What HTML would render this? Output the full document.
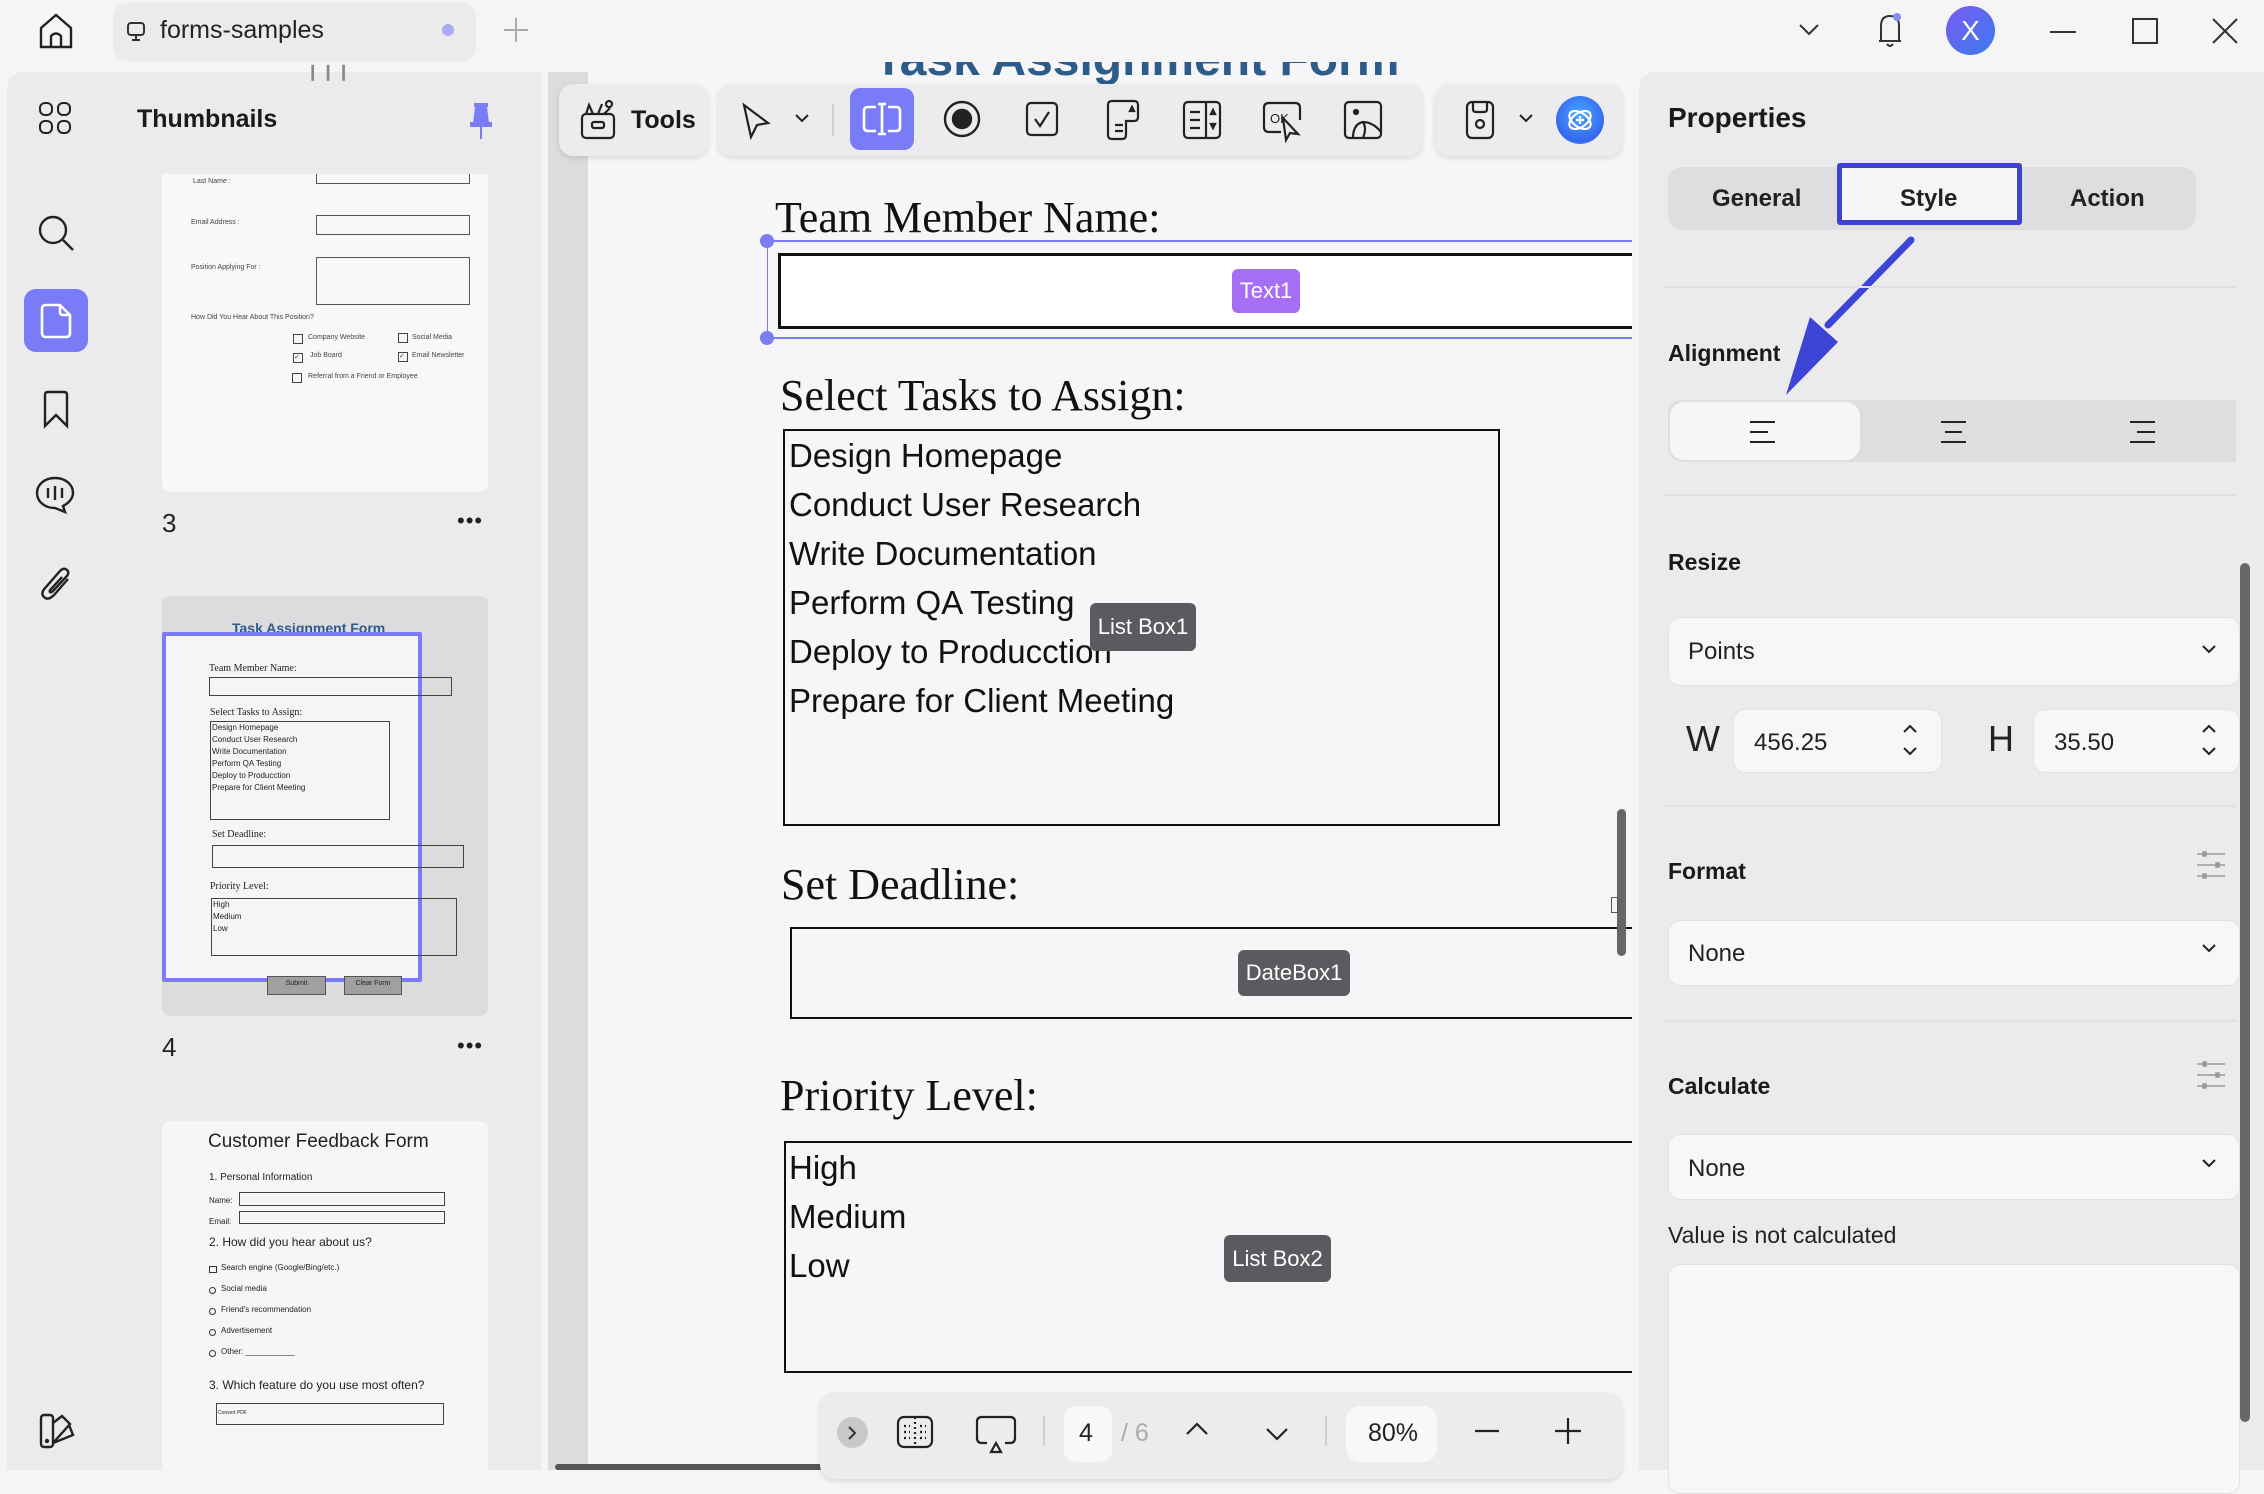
<!DOCTYPE html>
<html><head><meta charset="utf-8"><style>
*{margin:0;padding:0;box-sizing:border-box}
body{width:2264px;height:1470px;overflow:hidden;background:#f5f5f6;font-family:"Liberation Sans",sans-serif;position:relative;color:#1a1a1a}
.a{position:absolute}
.serif{font-family:"Liberation Serif",serif}
.badge{position:absolute;color:#fff;font-size:22px;display:flex;align-items:center;justify-content:center;border-radius:6px}
.sep{position:absolute;height:2px;background:#e1e1e3}
.h{position:absolute;font-weight:bold;font-size:23px}
.dd{position:absolute;background:#f7f7f8;border:1px solid #e2e2e4;border-radius:12px}
.tb{position:absolute;background:#ececee;border-radius:14px;box-shadow:0 2px 6px rgba(0,0,0,.12)}
svg{position:absolute;overflow:visible}
.t{position:absolute;white-space:nowrap}
</style></head><body>

<!-- top bar -->
<svg style="left:38px;top:12px" width="36" height="38" viewBox="0 0 36 38" fill="none" stroke="#222" stroke-width="2.4"><path d="M3 16 L18 3 L33 16 V35 H3 Z"/><path d="M13 35 V24 Q18 19 23 24 V35"/></svg>
<div class="a" style="left:113px;top:3px;width:363px;height:58px;background:#ebebec;border-radius:14px"></div>
<svg style="left:126px;top:21px" width="20" height="22" viewBox="0 0 20 22" fill="none" stroke="#333" stroke-width="2"><rect x="2" y="2" width="16" height="12" rx="3"/><path d="M10 14v5M6 19h8"/></svg>
<div class="t" style="left:160px;top:16px;font-size:25px;color:#222">forms-samples</div>
<div class="a" style="left:442px;top:24px;width:12px;height:12px;border-radius:50%;background:#a9abf5"></div>
<svg style="left:504px;top:18px" width="24" height="24" stroke="#aaa" stroke-width="2"><path d="M12 0v24M0 12h24"/></svg>
<svg style="left:1799px;top:24px" width="20" height="12" fill="none" stroke="#333" stroke-width="2"><path d="M1 1l9 9 9-9"/></svg>
<svg style="left:1876px;top:10px" width="28" height="40" fill="none" stroke="#333" stroke-width="2"><path d="M5 31V16Q5 6 14 6Q23 6 23 16V31H3h22M11 34q3 4 6 0"/><circle cx="21" cy="7" r="4" fill="#8a8cf5" stroke="none"/></svg>
<div class="a" style="left:1946px;top:6px;width:49px;height:49px;border-radius:50%;background:linear-gradient(135deg,#7a5cf0,#3b7af0);color:#fff;font-size:28px;display:flex;align-items:center;justify-content:center">X</div>
<svg style="left:2050px;top:30px" width="26" height="4"><path d="M0 2h26" stroke="#333" stroke-width="2"/></svg>
<svg style="left:2132px;top:18px" width="26" height="26" fill="none" stroke="#333" stroke-width="2"><rect x="1" y="1" width="24" height="24"/></svg>
<svg style="left:2212px;top:18px" width="26" height="26" stroke="#333" stroke-width="2"><path d="M1 1l24 24M25 1L1 25"/></svg>

<!-- left rail -->
<div class="a" style="left:7px;top:72px;width:98px;height:1398px;background:#ebebed;border-top-left-radius:16px"></div>
<svg style="left:39px;top:102px" width="32" height="32" fill="none" stroke="#222" stroke-width="2"><rect x="1" y="1" width="12" height="12" rx="5"/><rect x="19" y="1" width="12" height="12" rx="5"/><rect x="1" y="19" width="12" height="12" rx="5"/><rect x="19" y="19" width="12" height="12" rx="5"/></svg>
<svg style="left:37px;top:214px" width="38" height="38" fill="none" stroke="#222" stroke-width="2.4"><circle cx="16" cy="16" r="13"/><path d="M26 26l10 10"/></svg>
<div class="a" style="left:24px;top:289px;width:64px;height:63px;border-radius:12px;background:#7a7cf7"></div>
<svg style="left:40px;top:303px" width="32" height="36" fill="none" stroke="#fff" stroke-width="2.6"><path d="M6 2h14l10 10v18q0 4-4 4H6q-4 0-4-4V6q0-4 4-4z"/><path d="M20 2v7q0 3 3 3h7"/></svg>
<svg style="left:42px;top:390px" width="28" height="38" fill="none" stroke="#222" stroke-width="2.4"><path d="M3 5q0-3 3-3h16q3 0 3 3v31l-11-11-11 11z"/></svg>
<svg style="left:35px;top:476px" width="40" height="38" fill="none" stroke="#222" stroke-width="2.4"><path d="M20 2C9 2 2 9 2 17s7 15 18 15l10 4-2-6c6-3 10-8 10-13C38 9 31 2 20 2z"/><path d="M13 12v10M20 10v14M27 12v10"/></svg>
<svg style="left:40px;top:565px" width="34" height="38" fill="none" stroke="#222" stroke-width="2.4"><path d="M28 14L14 30q-6 6-10 2t2-10L20 6q4-4 7-1t-1 7L13 26q-2 2-3 1t1-3l11-12"/></svg>
<svg style="left:39px;top:1413px" width="36" height="36" fill="none" stroke="#222" stroke-width="2.4"><rect x="2" y="2" width="12" height="32" rx="3"/><path d="M14 10l9-7 8 8-17 19M14 30l20-8-4-10"/><circle cx="8" cy="28" r="1" fill="#222"/></svg>

<!-- thumbnails panel -->
<div class="a" style="left:105px;top:72px;width:436px;height:1398px;background:#ebebed"></div>
<div class="t" style="left:306px;top:62px;font-size:16px;color:#888;letter-spacing:2px">❙❙❙</div>
<div class="t" style="left:137px;top:105px;font-size:25px;font-weight:bold">Thumbnails</div>
<svg style="left:468px;top:103px" width="26" height="36" fill="#7a7cf7"><rect x="6" y="0" width="14" height="4"/><path d="M7 4h12l2 16H5z"/><rect x="2" y="19" width="22" height="5"/><rect x="12" y="24" width="2" height="12"/></svg>

<!-- thumb 1 -->
<div class="a" style="left:162px;top:174px;width:326px;height:318px;background:#f8f8f9;border-radius:0 0 8px 8px;overflow:hidden;font-size:7px;color:#444">
  <div class="t" style="left:31px;top:4px">Last Name :</div>
  <div class="a" style="left:154px;top:-10px;width:154px;height:20px;border:1.5px solid #555"></div>
  <div class="t" style="left:29px;top:45px">Email Address :</div>
  <div class="a" style="left:154px;top:41px;width:154px;height:20px;border:1.5px solid #555"></div>
  <div class="t" style="left:29px;top:90px">Position Applying For :</div>
  <div class="a" style="left:154px;top:83px;width:154px;height:48px;border:1.5px solid #555"></div>
  <div class="t" style="left:29px;top:140px">How Did You Hear About This Position?</div>
  <div class="a" style="left:131px;top:160px;width:10px;height:10px;border:1px solid #444"></div><div class="t" style="left:146px;top:160px">Company Website</div>
  <div class="a" style="left:236px;top:159px;width:10px;height:10px;border:1px solid #444"></div><div class="t" style="left:250px;top:160px">Social Media</div>
  <div class="a" style="left:131px;top:179px;width:10px;height:10px;border:1px solid #444;font-size:7px;line-height:8px">✓</div><div class="t" style="left:148px;top:178px">Job Board</div>
  <div class="a" style="left:236px;top:178px;width:10px;height:10px;border:1px solid #444;font-size:7px;line-height:8px">✓</div><div class="t" style="left:250px;top:178px">Email Newsletter</div>
  <div class="a" style="left:130px;top:199px;width:10px;height:10px;border:1px solid #444"></div><div class="t" style="left:146px;top:199px">Referral from a Friend or Employee</div>
</div>
<div class="t" style="left:162px;top:508px;font-size:26px;color:#222">3</div>
<div class="t" style="left:457px;top:508px;font-size:22px;color:#222;letter-spacing:1px">•••</div>

<!-- thumb 2 -->
<div class="a" style="left:162px;top:596px;width:326px;height:420px;background:#dcdcde;border-radius:8px"></div>
<div class="t" style="left:232px;top:620px;font-size:14px;font-weight:bold;color:#2d5b8a">Task Assignment Form</div>
<div class="a" style="left:162px;top:632px;width:260px;height:350px;background:#f5f5f7;border:4px solid #7a7cf7;border-radius:2px"></div>
<div class="a serif" style="left:162px;top:596px;width:326px;height:420px;font-size:10px;color:#222">
  <div class="t" style="left:47px;top:67px">Team Member Name:</div>
  <div class="a" style="left:47px;top:81px;width:243px;height:19px;border:1.5px solid #444"></div>
  <div class="t" style="left:48px;top:111px">Select Tasks to Assign:</div>
  <div class="a" style="left:48px;top:125px;width:180px;height:99px;border:1.5px solid #444;font-family:'Liberation Sans',sans-serif;font-size:8px;line-height:12px;padding-left:1px">Design Homepage<br>Conduct User Research<br>Write Documentation<br>Perform QA Testing<br>Deploy to Producction<br>Prepare for Client Meeting</div>
  <div class="t" style="left:50px;top:233px">Set Deadline:</div>
  <div class="a" style="left:50px;top:249px;width:252px;height:23px;border:1.5px solid #444"></div>
  <div class="t" style="left:48px;top:285px">Priority Level:</div>
  <div class="a" style="left:49px;top:302px;width:246px;height:58px;border:1.5px solid #444;font-family:'Liberation Sans',sans-serif;font-size:8px;line-height:12px;padding-left:1px">High<br>Medium<br>Low</div>
  <div class="a" style="left:105px;top:380px;width:59px;height:19px;background:#a0a0a2;border:1.5px solid #555;font-family:'Liberation Sans',sans-serif;font-size:7px;text-align:center;line-height:14px">Submit</div>
  <div class="a" style="left:182px;top:380px;width:58px;height:19px;background:#a0a0a2;border:1.5px solid #555;font-family:'Liberation Sans',sans-serif;font-size:7px;text-align:center;line-height:14px">Clear Form</div>
</div>
<div class="t" style="left:162px;top:1032px;font-size:26px;color:#222">4</div>
<div class="t" style="left:457px;top:1033px;font-size:22px;color:#222;letter-spacing:1px">•••</div>

<!-- thumb 3 -->
<div class="a" style="left:162px;top:1121px;width:326px;height:360px;background:#f6f6f7;border-radius:8px;color:#222;font-size:8px">
  <div class="t" style="left:46px;top:10px;font-size:19px">Customer Feedback Form</div>
  <div class="t" style="left:47px;top:51px;font-size:10px">1. Personal Information</div>
  <div class="t" style="left:47px;top:75px">Name:</div><div class="a" style="left:77px;top:71px;width:206px;height:14px;border:1.5px solid #444"></div>
  <div class="t" style="left:47px;top:96px">Email:</div><div class="a" style="left:77px;top:90px;width:206px;height:13px;border:1.5px solid #444"></div>
  <div class="t" style="left:47px;top:114px;font-size:12px">2. How did you hear about us?</div>
  <div class="a" style="left:47px;top:145px;width:8px;height:7px;border:1px solid #333"></div><div class="t" style="left:59px;top:142px">Search engine (Google/Bing/etc.)</div>
  <div class="a" style="left:47px;top:166px;width:7px;height:7px;border:1px solid #333;border-radius:50%"></div><div class="t" style="left:59px;top:163px">Social media</div>
  <div class="a" style="left:47px;top:187px;width:7px;height:7px;border:1px solid #333;border-radius:50%"></div><div class="t" style="left:59px;top:184px">Friend's recommendation</div>
  <div class="a" style="left:47px;top:208px;width:7px;height:7px;border:1px solid #333;border-radius:50%"></div><div class="t" style="left:59px;top:205px">Advertisement</div>
  <div class="a" style="left:47px;top:229px;width:7px;height:7px;border:1px solid #333;border-radius:50%"></div><div class="t" style="left:59px;top:226px">Other: ___________</div>
  <div class="t" style="left:47px;top:257px;font-size:12px">3. Which feature do you use most often?</div>
  <div class="a" style="left:54px;top:282px;width:228px;height:22px;border:1.5px solid #444;font-size:5px;line-height:18px;padding-left:1px">Convert PDF</div>
</div>

<!-- document area -->
<div class="a" style="left:548px;top:72px;width:40px;height:1398px;background:#dcdcde"></div>
<div class="a" style="left:588px;top:62px;width:1044px;height:1408px;background:#f6f6f8;overflow:hidden">
  <div class="t" style="left:286px;top:-30px;font-size:48px;font-weight:bold;color:#2d5b8a">Task Assignment Form</div>
</div>
<div class="a" style="left:555px;top:1464px;width:268px;height:6px;background:#555;border-radius:3px"></div>

<div class="t serif" style="left:775px;top:192px;font-size:44px;color:#111">Team Member Name:</div>
<div class="a" style="left:767px;top:240px;width:865px;height:2px;background:#7a7cf0"></div>
<div class="a" style="left:767px;top:337px;width:865px;height:2px;background:#7a7cf0"></div>
<div class="a" style="left:767px;top:241px;width:1px;height:97px;background:#7a7cf0"></div>
<div class="a" style="left:760px;top:234px;width:14px;height:14px;border-radius:50%;background:#7a7cf0"></div>
<div class="a" style="left:760px;top:331px;width:14px;height:14px;border-radius:50%;background:#7a7cf0"></div>
<div class="a" style="left:778px;top:253px;width:854px;height:76px;background:#fff;border:3px solid #111;border-right:none"></div>
<div class="badge" style="left:1232px;top:269px;width:68px;height:44px;background:#a66ef5">Text1</div>

<div class="t serif" style="left:780px;top:370px;font-size:44px;color:#111">Select Tasks to Assign:</div>
<div class="a" style="left:783px;top:429px;width:717px;height:397px;border:2.5px solid #111;font-size:33px;line-height:49px;padding-left:4px;color:#111">Design Homepage<br>Conduct User Research<br>Write Documentation<br>Perform QA Testing<br>Deploy to Producction<br>Prepare for Client Meeting</div>
<div class="badge" style="left:1090px;top:603px;width:106px;height:48px;background:#5b5a5f">List Box1</div>

<div class="t serif" style="left:781px;top:859px;font-size:44px;color:#111">Set Deadline:</div>
<div class="a" style="left:790px;top:927px;width:842px;height:92px;border:2.5px solid #111;border-right:none"></div>
<div class="badge" style="left:1238px;top:950px;width:112px;height:46px;background:#5b5a5f">DateBox1</div>
<div class="a" style="left:1617px;top:809px;width:9px;height:147px;background:#666;border-radius:5px"></div>
<div class="a" style="left:1611px;top:897px;width:7px;height:16px;border:1.5px solid #555;background:#f6f6f8"></div>

<div class="t serif" style="left:780px;top:1070px;font-size:44px;color:#111">Priority Level:</div>
<div class="a" style="left:784px;top:1141px;width:848px;height:232px;border:2.5px solid #111;border-right:none;font-size:33px;line-height:49px;padding-left:3px;color:#111">High<br>Medium<br>Low</div>
<div class="badge" style="left:1224px;top:1235px;width:107px;height:47px;background:#5b5a5f">List Box2</div>

<!-- top toolbar -->
<div class="tb" style="left:559px;top:84px;width:149px;height:72px"></div>
<svg style="left:580px;top:100px" width="36" height="40" fill="none" stroke="#222" stroke-width="2.2"><rect x="2" y="14" width="32" height="24" rx="4"/><rect x="12" y="22" width="12" height="6" rx="2"/><path d="M6 14l3-9 4 9M18 14l4-10M26 4a3 3 0 1 1 0 .1M24 14l6-6"/></svg>
<div class="t" style="left:631px;top:106px;font-size:25px;font-weight:bold">Tools</div>

<div class="tb" style="left:718px;top:84px;width:704px;height:72px"></div>
<svg style="left:741px;top:103px" width="30" height="36" fill="none" stroke="#222" stroke-width="2.2"><path d="M3 2l24 18-11 2-6 12z"/></svg>
<svg style="left:795px;top:114px" width="14" height="9" fill="none" stroke="#222" stroke-width="2"><path d="M1 1l6 6 6-6"/></svg>
<div class="a" style="left:832px;top:104px;width:2px;height:32px;background:#d0d0d2"></div>
<div class="a" style="left:850px;top:88px;width:64px;height:62px;border-radius:10px;background:#7a7cf7"></div>
<svg style="left:862px;top:101px" width="40" height="36" fill="none" stroke="#fff" stroke-width="2.6"><path d="M14 6H6q-4 0-4 4v16q0 4 4 4h8M26 6h8q4 0 4 4v16q0 4-4 4h-8M20 3v30M16 3h8M16 33h8"/></svg>
<svg style="left:943px;top:100px" width="38" height="38" fill="none" stroke="#222" stroke-width="2.4"><circle cx="19" cy="19" r="17"/><circle cx="19" cy="19" r="9" fill="#222"/></svg>
<svg style="left:1025px;top:101px" width="34" height="36" fill="none" stroke="#222" stroke-width="2.2"><rect x="2" y="2" width="30" height="32" rx="4"/><path d="M10 18l5 7 9-14"/></svg>
<svg style="left:1104px;top:99px" width="40" height="42" fill="none" stroke="#222" stroke-width="2.2"><path d="M4 6q0-4 4-4h22q4 0 4 4v12q0 4-4 4h-8v14q0 4-4 4H8q-4 0-4-4z"/><path d="M11 26h8M11 32h8M28 8l-2 4h4z" /></svg>
<svg style="left:1182px;top:100px" width="40" height="40" fill="none" stroke="#222" stroke-width="2.2"><rect x="2" y="2" width="36" height="36" rx="4"/><path d="M24 2v36M8 12h10M8 20h10M8 28h10M29 14l2-4 2 4zM29 24l2 4 2-4z"/></svg>
<svg style="left:1261px;top:100px" width="44" height="46" fill="none" stroke="#222" stroke-width="2.2"><path d="M20 32H8q-5 0-5-5V8q0-5 5-5h26q5 0 5 5v12"/><path d="M22 18l3 22 4-7 8 1z"/><text x="9" y="23" font-size="13" font-family="Liberation Sans" fill="#222" stroke="none">OK</text></svg>
<svg style="left:1343px;top:100px" width="40" height="40" fill="none" stroke="#222" stroke-width="2.2"><rect x="2" y="2" width="36" height="36" rx="4"/><circle cx="13" cy="12" r="2" fill="#222"/><path d="M10 38q0-14 10-16 10 0 18 10M20 22q4 6 0 16"/></svg>

<div class="tb" style="left:1435px;top:84px;width:187px;height:72px"></div>
<svg style="left:1465px;top:100px" width="30" height="40" fill="none" stroke="#222" stroke-width="2.2"><rect x="2" y="2" width="26" height="36" rx="5"/><path d="M8 2v7q0 3 3 3h8q3 0 3-3V2"/><circle cx="15" cy="24" r="4"/></svg>
<svg style="left:1519px;top:114px" width="14" height="9" fill="none" stroke="#222" stroke-width="2"><path d="M1 1l6 6 6-6"/></svg>
<div class="a" style="left:1556px;top:96px;width:48px;height:48px;border-radius:50%;background:radial-gradient(circle at 50% 40%,#4aa8ff,#3566f0 70%,#6ad0ff)"></div>
<svg style="left:1566px;top:106px" width="28" height="28" fill="none" stroke="#fff" stroke-width="2.2"><ellipse cx="14" cy="14" rx="12" ry="7" transform="rotate(-35 14 14)"/><ellipse cx="14" cy="14" rx="12" ry="7" transform="rotate(35 14 14)"/><path d="M14 10v8M10 14h8"/></svg>

<!-- bottom bar -->
<div class="tb" style="left:820px;top:1393px;width:802px;height:86px"></div>
<div class="a" style="left:837px;top:1417px;width:31px;height:31px;border-radius:50%;background:#c8c8ca"></div>
<svg style="left:848px;top:1426px" width="9" height="14" fill="none" stroke="#333" stroke-width="2"><path d="M1 1l6 6-6 6"/></svg>
<svg style="left:896px;top:1415px" width="38" height="34" fill="none" stroke="#222" stroke-width="2.2"><rect x="2" y="2" width="34" height="30" rx="6"/><path d="M19 2v30M8 11h6M8 17h6M8 23h6M24 11h6M24 17h6M24 23h6" stroke-dasharray="2 3"/></svg>
<svg style="left:975px;top:1415px" width="42" height="40" fill="none" stroke="#222" stroke-width="2.2"><path d="M12 28H7q-5 0-5-5V7q0-5 5-5h28q5 0 5 5v16q0 5-5 5h-5"/><path d="M21 28l-5 9h10z"/></svg>
<div class="a" style="left:1043px;top:1416px;width:2px;height:30px;background:#d0d0d2"></div>
<div class="a" style="left:1064px;top:1406px;width:48px;height:56px;border-radius:12px;background:#f8f8f9"></div>
<div class="t" style="left:1079px;top:1419px;font-size:25px;color:#222">4</div>
<div class="t" style="left:1121px;top:1419px;font-size:25px;color:#aaa">/ 6</div>
<svg style="left:1186px;top:1422px" width="22" height="13" fill="none" stroke="#222" stroke-width="2.2"><path d="M1 12l10-10 10 10"/></svg>
<svg style="left:1266px;top:1428px" width="22" height="13" fill="none" stroke="#222" stroke-width="2.2"><path d="M1 1l10 10 10-10"/></svg>
<div class="a" style="left:1325px;top:1416px;width:2px;height:30px;background:#d0d0d2"></div>
<div class="a" style="left:1346px;top:1406px;width:91px;height:56px;border-radius:14px;background:#f8f8f9"></div>
<div class="t" style="left:1368px;top:1419px;font-size:25px;color:#222">80%</div>
<svg style="left:1475px;top:1429px" width="24" height="4"><path d="M0 2h24" stroke="#222" stroke-width="2.2"/></svg>
<svg style="left:1555px;top:1418px" width="26" height="26" stroke="#222" stroke-width="2.2"><path d="M13 0v26M0 13h26"/></svg>

<!-- right panel -->
<div class="a" style="left:1639px;top:72px;width:625px;height:1398px;background:#ebebed;border-top-left-radius:16px"></div>
<div class="t" style="left:1668px;top:102px;font-size:28px;font-weight:bold">Properties</div>
<div class="a" style="left:1668px;top:167px;width:528px;height:63px;background:#dedee0;border-radius:14px"></div>
<div class="t" style="left:1712px;top:185px;font-size:24px;font-weight:bold;color:#222">General</div>
<div class="a" style="left:1837px;top:163px;width:185px;height:62px;background:#f6f6f8;border:5px solid #3d42d2;border-radius:3px"></div>
<div class="t" style="left:1900px;top:185px;font-size:24px;font-weight:bold;color:#222">Style</div>
<div class="t" style="left:2070px;top:185px;font-size:24px;font-weight:bold;color:#222">Action</div>
<svg style="left:1780px;top:235px" width="140" height="170"><path d="M131 5L48 90" stroke="#3d45d6" stroke-width="7" stroke-linecap="round"/><path d="M6 160L30 82 58 107z" fill="#3d45d6"/></svg>
<div class="sep" style="left:1663px;top:286px;width:573px"></div>
<div class="h" style="left:1668px;top:340px">Alignment</div>
<div class="a" style="left:1668px;top:400px;width:568px;height:62px;background:#dedee0;border-radius:14px 0 0 14px"></div>
<div class="a" style="left:1670px;top:402px;width:190px;height:58px;background:#f6f6f8;border-radius:14px"></div>
<svg style="left:1750px;top:420px" width="30" height="26" stroke="#222" stroke-width="2"><path d="M0 2h25M0 12h18M0 22h25"/></svg>
<svg style="left:1941px;top:420px" width="30" height="26" stroke="#222" stroke-width="2"><path d="M0 2h25M4 12h17M0 22h25"/></svg>
<svg style="left:2130px;top:420px" width="30" height="26" stroke="#222" stroke-width="2"><path d="M0 2h25M7 12h18M0 22h25"/></svg>
<div class="sep" style="left:1663px;top:494px;width:573px"></div>
<div class="h" style="left:1668px;top:549px">Resize</div>
<div class="dd" style="left:1668px;top:617px;width:572px;height:69px"></div>
<div class="t" style="left:1688px;top:638px;font-size:24px;color:#222">Points</div>
<svg style="left:2202px;top:645px" width="14" height="9" fill="none" stroke="#222" stroke-width="2"><path d="M1 1l6 6 6-6"/></svg>
<div class="t" style="left:1686px;top:718px;font-size:36px;color:#222;font-weight:300">W</div>
<div class="dd" style="left:1733px;top:709px;width:209px;height:64px"></div>
<div class="t" style="left:1754px;top:729px;font-size:24px;color:#222">456.25</div>
<svg style="left:1903px;top:724px" width="14" height="32" fill="none" stroke="#222" stroke-width="2"><path d="M1 8l6-6 6 6M1 24l6 6 6-6"/></svg>
<div class="t" style="left:1988px;top:718px;font-size:36px;color:#222">H</div>
<div class="dd" style="left:2033px;top:709px;width:207px;height:64px"></div>
<div class="t" style="left:2054px;top:729px;font-size:24px;color:#222">35.50</div>
<svg style="left:2202px;top:724px" width="14" height="32" fill="none" stroke="#222" stroke-width="2"><path d="M1 8l6-6 6 6M1 24l6 6 6-6"/></svg>
<div class="sep" style="left:1663px;top:805px;width:573px"></div>
<div class="h" style="left:1668px;top:858px">Format</div>
<svg style="left:2197px;top:852px" width="30" height="30" stroke="#999" stroke-width="1.5"><path d="M0 2h28M0 13h28M0 24h28"/><rect x="6" y="0" width="3" height="4" fill="#999"/><rect x="19" y="11" width="3" height="4" fill="#999"/><rect x="6" y="22" width="3" height="4" fill="#999"/></svg>
<div class="dd" style="left:1668px;top:920px;width:572px;height:66px"></div>
<div class="t" style="left:1688px;top:940px;font-size:24px;color:#222">None</div>
<svg style="left:2202px;top:944px" width="14" height="9" fill="none" stroke="#222" stroke-width="2"><path d="M1 1l6 6 6-6"/></svg>
<div class="sep" style="left:1663px;top:1020px;width:573px"></div>
<div class="h" style="left:1668px;top:1073px">Calculate</div>
<svg style="left:2197px;top:1062px" width="30" height="30" stroke="#999" stroke-width="1.5"><path d="M0 2h28M0 13h28M0 24h28"/><rect x="6" y="0" width="3" height="4" fill="#999"/><rect x="19" y="11" width="3" height="4" fill="#999"/><rect x="6" y="22" width="3" height="4" fill="#999"/></svg>
<div class="dd" style="left:1668px;top:1134px;width:572px;height:66px"></div>
<div class="t" style="left:1688px;top:1155px;font-size:24px;color:#222">None</div>
<svg style="left:2202px;top:1159px" width="14" height="9" fill="none" stroke="#222" stroke-width="2"><path d="M1 1l6 6 6-6"/></svg>
<div class="t" style="left:1668px;top:1222px;font-size:23px;color:#222">Value is not calculated</div>
<div class="dd" style="left:1668px;top:1264px;width:572px;height:230px"></div>
<div class="a" style="left:2240px;top:563px;width:10px;height:859px;background:#67676a;border-radius:5px"></div>
</body></html>
